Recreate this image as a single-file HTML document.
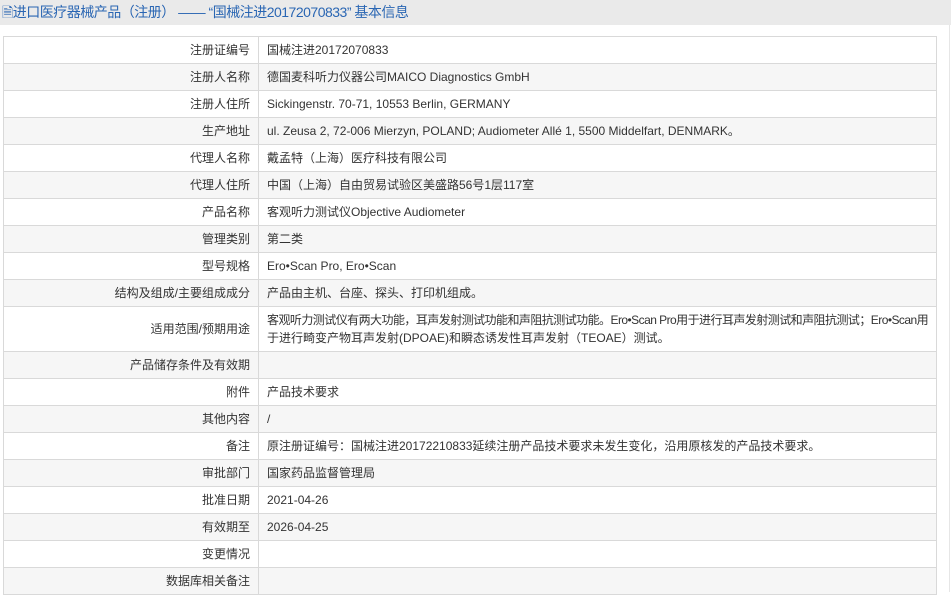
<!DOCTYPE html>
<html><head><meta charset="utf-8"><style>
html,body{margin:0;padding:0;background:#fff;width:951px;height:592px;overflow:hidden;font-family:"Liberation Sans","Noto Sans CJK SC",sans-serif;}
.hd{position:absolute;left:0;top:0;width:951px;height:25px;background:#eaeaea;color:#2a66b3;font-size:14px;line-height:24px;padding-left:2px;box-sizing:border-box;white-space:nowrap;letter-spacing:-0.5px;}
.sb{position:absolute;left:949px;top:25px;width:1px;height:567px;background:#e6e6e6;}
table{position:absolute;left:3px;top:36px;width:934px;table-layout:fixed;border-collapse:collapse;font-size:12px;color:#333;}
td{border:1px solid #d9d9d9;height:26px;padding:0 8px;line-height:18px;box-sizing:border-box;}
td.l{width:255px;text-align:right;}
tr:nth-child(even) td{background:#f6f6f6;}
.nw{white-space:nowrap;overflow:hidden;}
.nw span{letter-spacing:-0.55px;}
</style></head><body>
<div class="hd">🗎进口医疗器械产品（注册） —— “国械注进20172070833” 基本信息</div>
<div class="sb"></div>
<table>
<tr style="height:27px"><td class="l">注册证编号</td><td>国械注进20172070833</td></tr>
<tr style="height:27px"><td class="l">注册人名称</td><td>德国麦科听力仪器公司MAICO Diagnostics GmbH</td></tr>
<tr style="height:27px"><td class="l">注册人住所</td><td>Sickingenstr. 70-71, 10553 Berlin, GERMANY</td></tr>
<tr style="height:27px"><td class="l">生产地址</td><td>ul. Zeusa 2, 72-006 Mierzyn, POLAND; Audiometer Allé 1, 5500 Middelfart, DENMARK。</td></tr>
<tr style="height:27px"><td class="l">代理人名称</td><td>戴孟特（上海）医疗科技有限公司</td></tr>
<tr style="height:27px"><td class="l">代理人住所</td><td>中国（上海）自由贸易试验区美盛路56号1层117室</td></tr>
<tr style="height:27px"><td class="l">产品名称</td><td>客观听力测试仪Objective Audiometer</td></tr>
<tr style="height:27px"><td class="l">管理类别</td><td>第二类</td></tr>
<tr style="height:27px"><td class="l">型号规格</td><td>Ero•Scan Pro, Ero•Scan</td></tr>
<tr style="height:27px"><td class="l">结构及组成/主要组成成分</td><td>产品由主机、台座、探头、打印机组成。</td></tr>
<tr style="height:45px"><td class="l">适用范围/预期用途</td><td><div class="nw"><span>客观听力测试仪有两大功能，耳声发射测试功能和声阻抗测试功能。Ero•Scan Pro用于进行耳声发射测试和声阻抗测试；Ero•Scan用</span><br>于进行畸变产物耳声发射(DPOAE)和瞬态诱发性耳声发射（TEOAE）测试。</div></td></tr>
<tr style="height:27px"><td class="l">产品储存条件及有效期</td><td></td></tr>
<tr style="height:27px"><td class="l">附件</td><td>产品技术要求</td></tr>
<tr style="height:27px"><td class="l">其他内容</td><td>/</td></tr>
<tr style="height:27px"><td class="l">备注</td><td>原注册证编号：国械注进20172210833延续注册产品技术要求未发生变化，沿用原核发的产品技术要求。</td></tr>
<tr style="height:27px"><td class="l">审批部门</td><td>国家药品监督管理局</td></tr>
<tr style="height:27px"><td class="l">批准日期</td><td>2021-04-26</td></tr>
<tr style="height:27px"><td class="l">有效期至</td><td>2026-04-25</td></tr>
<tr style="height:27px"><td class="l">变更情况</td><td></td></tr>
<tr style="height:27px"><td class="l">数据库相关备注</td><td></td></tr>
</table>
</body></html>
